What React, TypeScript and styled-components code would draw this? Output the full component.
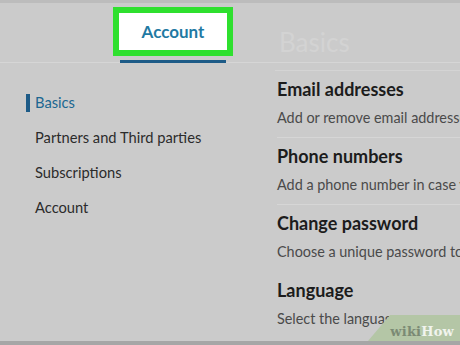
import React from "react";
import styled, { createGlobalStyle } from "styled-components";

const Global = createGlobalStyle`
  html, body { margin: 0; padding: 0; }
  body {
    width: 460px;
    height: 345px;
    overflow: hidden;
    background: #cbcbcb;
    font-family: "Lato", "Noto Sans", sans-serif;
  }
`;

const Page = styled.div`
  position: relative;
  width: 460px;
  height: 345px;
  display: flex;
  flex-direction: column;
  background: #cbcbcb;
  overflow: hidden;
`;

const TopStrip = styled.div`
  height: 3px;
  background: #bcbcbc;
  flex: none;
`;

const Header = styled.header`
  box-sizing: border-box;
  height: 60px;
  flex: none;
  display: flex;
  align-items: flex-end;
  padding-left: 113px;
  border-bottom: 1px solid #d6d6d6;
`;

const Tab = styled.div`
  display: flex;
  flex-direction: column;
  align-items: center;
  gap: 4px;
  margin-bottom: -1px;
`;

const Highlight = styled.div`
  box-sizing: border-box;
  width: 120px;
  height: 49px;
  border: 6px solid #2fe02f;
  background: #ffffff;
  display: flex;
  align-items: center;
  justify-content: center;
  font-size: 17px;
  font-weight: 700;
  color: #1f7aa3;
`;

const TabUnderline = styled.div`
  width: 106px;
  height: 3px;
  background: #1d5b87;
`;

const FadedTitle = styled.div`
  align-self: flex-start;
  margin-top: 24px;
  margin-left: 46px;
  font-size: 26px;
  line-height: 30px;
  color: #d3d3d3;
  font-weight: 400;
`;

const Body = styled.div`
  flex: 1;
  display: flex;
  min-height: 0;
`;

const Sidebar = styled.nav`
  width: 275px;
  flex: none;
  box-sizing: border-box;
  padding: 22px 0 0 26px;
  display: flex;
  flex-direction: column;
`;

const NavItem = styled.div<{ $active?: boolean }>`
  display: flex;
  align-items: center;
  height: 35px;
  font-size: 14.7px;
  line-height: 35px;
  color: ${(p) => (p.$active ? "#1b6791" : "#2b2b2b")};
`;

const Marker = styled.span<{ $active?: boolean }>`
  width: 4px;
  height: 18px;
  margin-right: 5px;
  background: ${(p) => (p.$active ? "#1d5b87" : "transparent")};
`;

const Main = styled.main`
  flex: 1;
  margin-top: 7px;
  border-top: 1px solid #d4d4d4;
  padding-left: 2px;
  display: flex;
  flex-direction: column;
  white-space: nowrap;
  overflow: hidden;
`;

const Section = styled.section<{ $divider?: boolean }>`
  padding: 7px 0 9px;
  border-bottom: 1px solid ${(p) => (p.$divider ? "#d6d6d6" : "transparent")};
`;

const Heading = styled.div`
  font-size: 18px;
  font-weight: 700;
  line-height: 22px;
  color: #1c1c1c;
`;

const Desc = styled.div`
  margin-top: 7px;
  font-size: 14.4px;
  line-height: 21px;
  color: #4a4a4a;
`;

const BottomStrip = styled.div`
  height: 4px;
  flex: none;
  background: #a6a6a6;
`;

const Watermark = styled.div`
  position: absolute;
  right: 0;
  bottom: 4px;
  width: 92px;
  height: 30px;
`;

const WatermarkShape = styled.svg`
  position: absolute;
  inset: 0;
`;

const WatermarkText = styled.div`
  position: absolute;
  right: 6px;
  bottom: 2px;
  font-family: "DejaVu Serif", "Liberation Serif", serif;
  font-weight: 700;
  font-size: 13px;
  letter-spacing: 0.2px;
  color: #7b8a74;
  span { color: #f1f4ee; }
`;

const sections = [
  { title: "Email addresses", desc: "Add or remove email addresses on your account", divider: true },
  { title: "Phone numbers", desc: "Add a phone number in case you have trouble signing in", divider: true },
  { title: "Change password", desc: "Choose a unique password to protect your account", divider: false },
  { title: "Language", desc: "Select the language you use on LinkedIn", divider: false },
];

const navItems = ["Basics", "Partners and Third parties", "Subscriptions", "Account"];

export default function App() {
  return (
    <Page>
      <Global />
      <TopStrip />
      <Header>
        <Tab>
          <Highlight>Account</Highlight>
          <TabUnderline />
        </Tab>
        <FadedTitle>Basics</FadedTitle>
      </Header>
      <Body>
        <Sidebar>
          {navItems.map((n, i) => (
            <NavItem key={n} $active={i === 0}>
              <Marker $active={i === 0} />
              {n}
            </NavItem>
          ))}
        </Sidebar>
        <Main>
          {sections.map((s) => (
            <Section key={s.title} $divider={s.divider}>
              <Heading>{s.title}</Heading>
              <Desc>{s.desc}</Desc>
            </Section>
          ))}
        </Main>
      </Body>
      <BottomStrip />
      <Watermark>
        <WatermarkShape width="92" height="30" viewBox="0 0 92 30">
          <polygon points="0,30 22,4 92,4 92,30" fill="#b4c6a6" />
        </WatermarkShape>
        <WatermarkText>
          wiki<span>How</span>
        </WatermarkText>
      </Watermark>
    </Page>
  );
}
